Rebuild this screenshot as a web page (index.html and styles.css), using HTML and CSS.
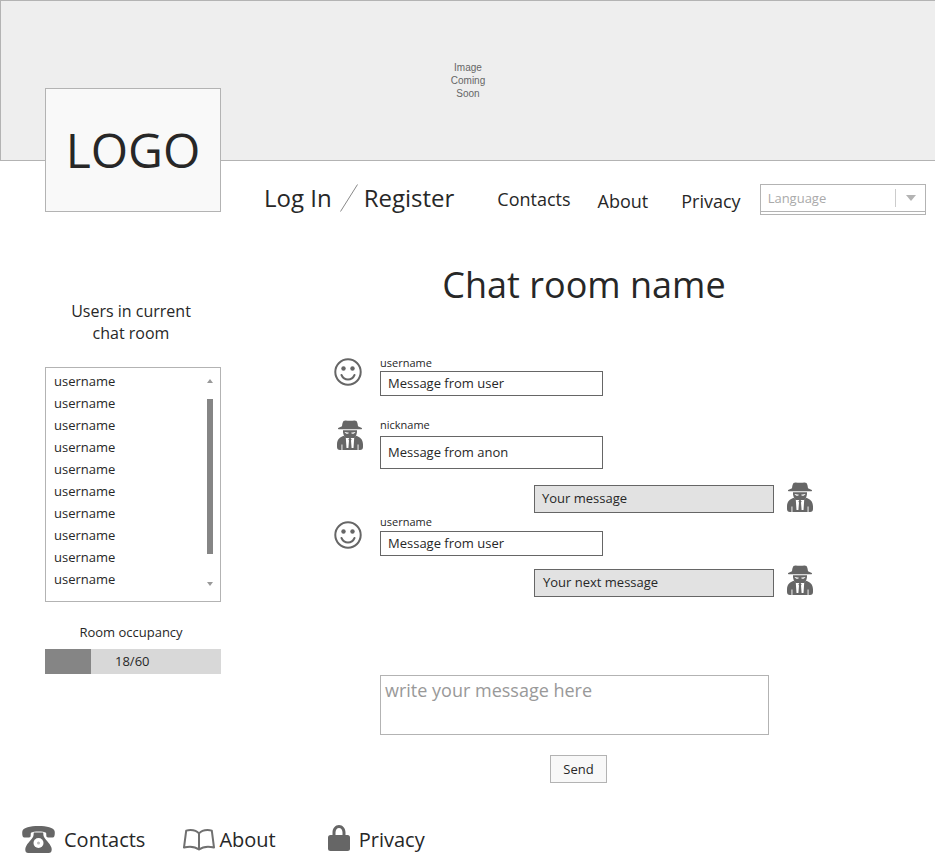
FILE: index.html
```html
<!DOCTYPE html>
<html lang="en">
<head>
<meta charset="utf-8">
<title>Chat room</title>
<link rel="stylesheet" href="styles.css">
</head>
<body>
<svg class="defs" width="0" height="0" aria-hidden="true">
  <symbol id="spy" viewBox="0 0 26 30">
    <path fill="#666" d="M6.500 1C8 -.2 10.500 .8 13 .8s5-1 6.500 .2C20.500 2.500 20.800 4.500 21 6.300L24.800 8c.4.500.2 1-.4 1.200H1.600C1 9 .8 8.500 1.200 8L5 6.300C5.200 4.500 5.500 2.500 6.500 1z"/>
    <path fill="#666" d="M6 10.200h14c.3 3-.9 6-2.500 7.800h-9C6.900 16.200 5.700 13.200 6 10.200z"/>
    <path fill="#fff" d="M7.500 12l4.500 .8c-.6 1.500-3.500 1.300-4.500-.8zM18.500 12L14 12.800c.6 1.500 3.500 1.300 4.500-.8z"/>
    <path fill="#666" d="M7 15.800C2.800 17 0 19.500 0 24.500V27c0 2 1 3 3 3h20c2 0 3-1 3-3v-2.500c0-5-2.800-7.500-7-8.700L17 18H9z"/>
    <path fill="#fff" d="M8.800 18H12.400l-1 1.500.6 1-.6 7.500H9.500zM17.200 18H13.600l1 1.500-.6 1 .6 7.500h1.900z"/>
    <path fill="#fff" d="M4.500 24.500h.9V30h-.9zM20.600 24.500h.9V30h-.9z"/>
  </symbol>
  <symbol id="smile" viewBox="0 0 28 28">
    <circle cx="14" cy="14" r="12.700" fill="none" stroke="#666" stroke-width="2"/>
    <circle cx="9.500" cy="10.500" r="2.200" fill="#666"/>
    <circle cx="18.500" cy="10.500" r="2.200" fill="#666"/>
    <path d="M7.500 17c1.300 3 3.600 4.500 6.500 4.500s5.200-1.500 6.500-4.500" fill="none" stroke="#666" stroke-width="2" stroke-linecap="round"/>
  </symbol>
</svg>

<header class="hero"><p class="hero-text">Image<br>Coming<br>Soon</p></header>

<div class="topbar">
  <div class="logo">LOGO</div>
  <nav class="auth">
    <a class="auth-link">Log In</a>
    <svg class="slash" width="18" height="28" viewBox="0 0 18 28"><path d="M.5 27.500L17.500.5" stroke="#888" stroke-width="1" fill="none"/></svg>
    <a class="auth-link">Register</a>
  </nav>
  <nav class="menu">
    <a class="menu-link menu-contacts">Contacts</a>
    <a class="menu-link menu-about">About</a>
    <a class="menu-link menu-privacy">Privacy</a>
  </nav>
  <div class="select">
    <div class="select-face">
      <span class="select-label">Language</span>
      <span class="select-divider"></span>
      <span class="select-arrow"></span>
    </div>
  </div>
</div>

<main class="layout">
  <aside class="sidebar">
    <h2 class="side-title">Users in current<br>chat room</h2>
    <div class="userlist">
      <ul class="users">
        <li>username</li><li>username</li><li>username</li><li>username</li><li>username</li>
        <li>username</li><li>username</li><li>username</li><li>username</li><li>username</li>
      </ul>
      <div class="scroll">
        <span class="scroll-up"></span>
        <span class="scroll-thumb"></span>
        <span class="scroll-down"></span>
      </div>
    </div>
    <p class="occ-label">Room occupancy</p>
    <div class="occ-bar"><span class="occ-fill"></span><span class="occ-value">18/60</span></div>
  </aside>

  <section class="chat">
    <h1 class="room-title">Chat room name</h1>
    <div class="messages">
      <div class="msg msg-1">
        <svg class="avatar" width="28" height="28"><use href="#smile"/></svg>
        <div class="msg-body">
          <div class="msg-name">username</div>
          <div class="bubble">Message from user</div>
        </div>
      </div>
      <div class="msg msg-2">
        <svg class="avatar avatar-spy" width="26" height="30"><use href="#spy"/></svg>
        <div class="msg-body">
          <div class="msg-name">nickname</div>
          <div class="bubble bubble-tall">Message from anon</div>
        </div>
      </div>
      <div class="own own-1">
        <div class="own-bubble">Your message</div>
        <svg class="own-icon" width="26" height="30"><use href="#spy"/></svg>
      </div>
      <div class="msg msg-3">
        <svg class="avatar" width="28" height="28"><use href="#smile"/></svg>
        <div class="msg-body">
          <div class="msg-name">username</div>
          <div class="bubble">Message from user</div>
        </div>
      </div>
      <div class="own own-2">
        <div class="own-bubble">Your next message</div>
        <svg class="own-icon" width="26" height="30"><use href="#spy"/></svg>
      </div>
    </div>
    <form class="composer">
      <textarea class="input" placeholder="write your message here"></textarea>
      <button class="send" type="button">Send</button>
    </form>
  </section>
</main>

<footer class="footer">
  <a class="foot-link foot-contacts">
    <svg class="icon-phone" width="33" height="27" viewBox="0 0 33 27"><path fill="#666" d="M16.500 0C8 0 1.500 1.800 .4 5 0 6.500 .2 10 1 11c.8.800 6.500.800 7.300 0 .6-.7.300-3 .6-4.200C10.500 5.800 13 5.500 16.500 5.500s6 .3 7.600 1.300c.3 1.200 0 3.500 .6 4.200.8.800 6.500.800 7.300 0 .8-1 1-4.500 .6-6C31.500 1.800 25 0 16.500 0z"/><path fill="#666" d="M11.800 6.500c-.1 1-.1 2.500-.5 3.800C10 14 5.500 16.500 3.600 21.500 2.800 24 3.500 27 6 27h21c2.500 0 3.200-3 2.400-5.500C27.500 16.500 23 14 21.700 10.300c-.4-1.300-.4-2.800-.5-3.800z"/><circle cx="16.500" cy="17" r="5" fill="#fff"/><circle cx="16.500" cy="17" r="1.500" fill="#bbb"/></svg>
    <span>Contacts</span>
  </a>
  <a class="foot-link foot-about">
    <svg class="icon-book" width="32" height="22" viewBox="0 0 32 22"><path fill="none" stroke="#707070" stroke-width="2" stroke-linejoin="round" d="M16 4.500C14 2 11 1 7.500 1 6 1 4.500 1.200 3.200 1.600L1 18.500c5-1.300 11-1 15 2 4-3 10-3.300 15-2L28.800 1.600C27.500 1.200 26 1 24.500 1 21 1 18 2 16 4.500zM16 4.500V20.500"/></svg>
    <span>About</span>
  </a>
  <a class="foot-link foot-privacy">
    <svg width="22" height="26" viewBox="0 0 22 26"><path fill="#666" d="M4.500 11V7.500C4.500 3.300 7.300 0 11 0s6.500 3.300 6.500 7.500V11h-3V7.500C14.500 5 13 3 11 3S7.500 5 7.500 7.500V11z"/><rect x="0" y="10" width="22" height="16" rx="2.500" fill="#666"/></svg>
    <span>Privacy</span>
  </a>
</footer>
</body>
</html>
```

FILE: styles.css
```css
* { box-sizing: border-box; }

html, body { margin: 0; padding: 0; }

body {
  width: 935px;
  height: 858px;
  overflow: hidden;
  background: #fff;
  color: #272727;
  font-family: "Open Sans", "Liberation Sans", sans-serif;
}

.defs { display: block; height: 0; }

/* hero */
.hero {
  height: 161px;
  width: 940px;
  background: #eeeeee;
  border: 1px solid #b3b3b3;
  display: flex;
  align-items: center;
  justify-content: center;
  padding-right: 4px;
}

.hero-text {
  margin: 0;
  font-family: "Liberation Sans", Arial, sans-serif;
  font-size: 10px;
  line-height: 13px;
  text-align: center;
  color: #666;
}

/* top bar */
.topbar {
  display: flex;
  align-items: flex-start;
  height: 100px;
  padding-left: 45px;
}

.logo {
  width: 176px;
  height: 124px;
  margin-top: -73px;
  position: relative;
  background: #f9f9f9;
  border: 1px solid #b3b3b3;
  display: flex;
  align-items: center;
  justify-content: center;
  font-size: 48px;
  line-height: 60px;
}

.auth {
  display: flex;
  align-items: flex-start;
  margin-left: 43px;
  padding-top: 20px;
}

.auth-link {
  font-size: 24px;
  line-height: 33px;
}

.slash { margin: 3px 6px 0 8px; }

.menu {
  display: flex;
  align-items: flex-start;
  margin-left: 43px;
  padding-top: 27px;
}

.menu-link {
  font-size: 18px;
  line-height: 24px;
}

.menu-contacts { margin-top: -1px; }
.menu-about { margin-left: 27px; margin-top: 1px; }
.menu-privacy { margin-left: 33px; margin-top: 1px; }

.select {
  width: 166px;
  height: 31px;
  margin-top: 23px;
  margin-left: 19px;
  border: 1px solid #b3b3b3;
}

.select-face {
  height: 27px;
  border-bottom: 1px solid #b3b3b3;
  display: flex;
  align-items: center;
  padding-left: 7px;
}

.select-label {
  flex: 1;
  font-size: 13px;
  line-height: 26px;
  color: #aaa;
}

.select-divider {
  width: 1px;
  height: 18px;
  background: #ccc;
}

.select-arrow {
  width: 0;
  height: 0;
  margin: 0 9px 0 10px;
  border-left: 5px solid transparent;
  border-right: 5px solid transparent;
  border-top: 6px solid #b3b3b3;
}

/* layout */
.layout {
  display: flex;
  align-items: flex-start;
  padding-left: 45px;
}

.sidebar {
  width: 176px;
  margin-top: 39px;
}

.side-title {
  margin: 0 4px 23px 0;
  font-size: 16px;
  font-weight: 400;
  line-height: 22px;
  text-align: center;
}

.userlist {
  display: flex;
  justify-content: space-between;
  height: 235px;
  border: 1px solid #b3b3b3;
  padding: 2px 7px 0 8px;
}

.users {
  list-style: none;
  margin: 0;
  padding: 0;
  font-size: 13px;
  line-height: 22px;
}

.scroll {
  width: 6px;
  height: 220px;
  margin-top: 9px;
  position: relative;
  display: flex;
  flex-direction: column;
  align-items: center;
}

.scroll-up {
  width: 0;
  height: 0;
  border-left: 3px solid transparent;
  border-right: 3px solid transparent;
  border-bottom: 4px solid #999;
}

.scroll-thumb {
  width: 6px;
  height: 155px;
  margin-top: 16px;
  background: #858585;
}

.scroll-down {
  width: 0;
  height: 0;
  margin-top: 28px;
  border-left: 3px solid transparent;
  border-right: 3px solid transparent;
  border-top: 4px solid #999;
}

.occ-label {
  margin: 22px 4px 8px 0;
  font-size: 13px;
  line-height: 17px;
  text-align: center;
}

.occ-bar {
  display: flex;
  align-items: center;
  height: 25px;
  background: #d8d8d8;
}

.occ-fill {
  width: 46px;
  height: 25px;
  background: #858585;
}

.occ-value {
  margin-left: 24px;
  font-size: 13px;
  line-height: 25px;
}

/* chat */
.chat {
  width: 500px;
  margin-left: 113px;
}

.room-title {
  margin: -1px 0 46px;
  font-size: 36px;
  font-weight: 400;
  line-height: 49px;
  text-align: center;
}

.messages { height: 242px; }

.msg {
  display: flex;
  align-items: flex-start;
}

.avatar { flex: none; margin-top: 3px; margin-right: 18px; }
.avatar-spy { margin: 3px 17px 0 3px; }

.msg-2 { margin-top: 21px; }
.msg-2 .msg-name { height: 19px; }
.msg-3 { margin-top: 2px; margin-bottom: 9px; }
.msg-3 .avatar { margin-top: 6px; }
.msg-3 .msg-name { line-height: 14px; }

.msg-name {
  height: 16px;
  font-size: 11px;
  line-height: 16px;
}

.bubble {
  width: 223px;
  height: 25px;
  border: 1px solid #666;
  padding-left: 7px;
  font-size: 13px;
  line-height: 23px;
}

.bubble-tall {
  height: 33px;
  line-height: 31px;
}

.own {
  display: flex;
  align-items: flex-start;
  padding-left: 200px;
}

.own-1 { margin-top: 13px; height: 31px; }
.own-2 { height: 31px; }

.own-bubble {
  width: 240px;
  height: 28px;
  margin-top: 3px;
  margin-right: 13px;
  background: #e2e2e2;
  border: 1px solid #666;
  padding-left: 7px;
  font-size: 13px;
  line-height: 25px;
}

.own-2 .own-bubble { margin-top: 4px; padding-left: 8px; }
.own-icon { flex: none; }

.composer {
  display: flex;
  flex-direction: column;
  align-items: flex-start;
  padding-left: 46px;
  margin-top: 78px;
}

.input {
  display: block;
  width: 389px;
  height: 60px;
  margin: 0;
  padding: 2px 4px;
  background: #fff;
  border: 1px solid #b3b3b3;
  border-radius: 0;
  outline: 0;
  resize: none;
  font-family: inherit;
  font-size: 18px;
  line-height: 24px;
  color: #272727;
}

.input::placeholder { color: #999; opacity: 1; }

.send {
  width: 57px;
  height: 28px;
  margin-top: 20px;
  margin-left: 170px;
  padding: 0;
  background: #f8f8f8;
  border: 1px solid #b3b3b3;
  border-radius: 0;
  font-family: inherit;
  font-size: 13px;
  color: #272727;
}

/* footer */
.footer {
  display: flex;
  align-items: flex-start;
  padding-left: 22px;
  margin-top: 42px;
}

.foot-link {
  display: flex;
  align-items: flex-start;
  font-size: 20px;
  line-height: 28px;
}

.foot-link span { margin-top: 1px; }

.icon-phone { margin-top: 1px; margin-right: 9px; }
.icon-book { margin-top: 4px; margin-right: 4px; }
.foot-about { margin-left: 38px; }
.foot-privacy { margin-left: 52px; }
.foot-privacy svg { margin-right: 9px; }
```
